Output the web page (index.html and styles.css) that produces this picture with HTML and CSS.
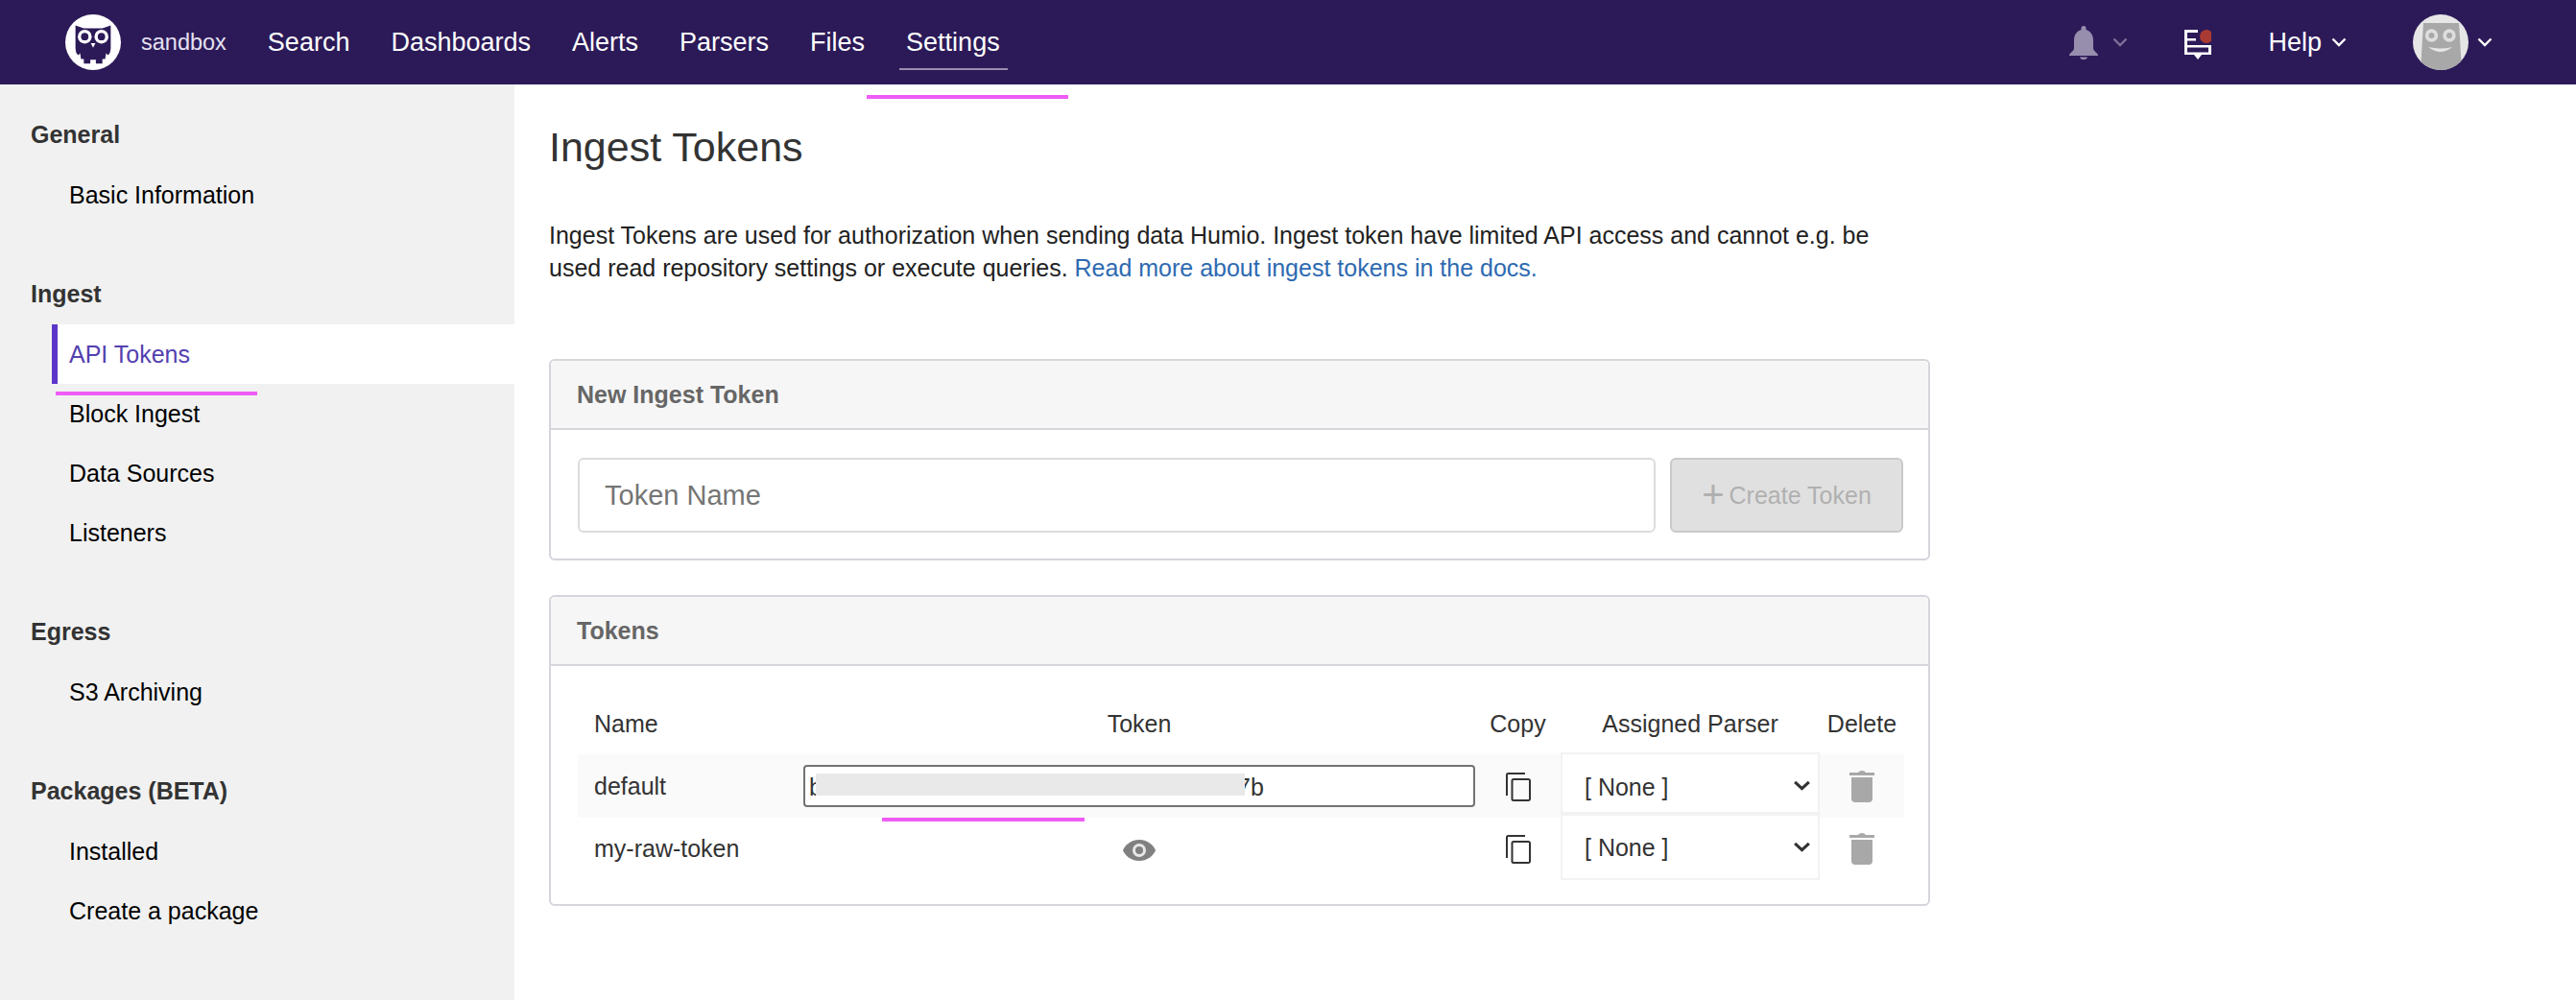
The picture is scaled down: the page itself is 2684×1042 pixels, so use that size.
FILE: index.html
```html
<!DOCTYPE html>
<html lang="en">
<head>
  <meta charset="UTF-8">
  <title>Ingest Tokens</title>
  <link rel="stylesheet" href="styles.css">
</head>
<body>

  <header class="topbar">
    <svg class="logo" viewBox="0 0 60 60">
      <circle cx="30" cy="30" r="30" fill="#fff"/>
      <path d="M11 12L20 15H40L49 12V36Q49 42 46 44L44 42L43 48H40V53H33V49H27V53H20V48H17L16 42L14 44Q11 42 11 36Z" fill="#2c1a58"/>
      <circle cx="21" cy="24" r="7.500" fill="#fff"/>
      <circle cx="39" cy="24" r="7.500" fill="#fff"/>
      <circle cx="21" cy="24" r="4" fill="#2c1a58"/>
      <circle cx="39" cy="24" r="4" fill="#2c1a58"/>
      <path d="M27.500 31H32.500L30 36Z" fill="#fff"/>
    </svg>
    <span class="repo">sandbox</span>
    <nav class="mainnav">
      <a href="#">Search</a>
      <a href="#">Dashboards</a>
      <a href="#">Alerts</a>
      <a href="#">Parsers</a>
      <a href="#">Files</a>
      <a href="#" class="current">Settings</a>
    </nav>
    <div class="topright">
      <svg class="bell" viewBox="0 0 30 35"><path d="M15 0a2.500 2.500 0 0 1 2.500 2.500V4C23 6 25 10 25 15V23C25 26 28 27 30 30V31H0V30C2 27 5 26 5 23V15C5 10 7 6 12.500 4V2.500A2.500 2.500 0 0 1 15 0Z M11 32.500H19C18 36 12 36 11 32.500Z" fill="#978eae"/></svg>
      <svg class="chev chev-dim" viewBox="0 0 16 10"><path d="M1.500 1.500 8 8l6.500-6.500" fill="none" stroke="#7d7197" stroke-width="2.400"/></svg>
      <svg class="news" viewBox="0 0 28 31">
        <path d="M0 0H14V3H3V9H12V11.500H3V16H28V26H18L14 31L10 26H0ZM3 18.500V23.500H25V18.500Z" fill="#fff"/>
        <circle cx="23" cy="7" r="7" fill="#a93a33"/>
      </svg>
      <span class="help">Help</span>
      <svg class="chev" viewBox="0 0 16 10"><path d="M1.500 1.500 8 8l6.500-6.500" fill="none" stroke="#fff" stroke-width="2.400"/></svg>
      <svg class="avatar" viewBox="0 0 58 58">
        <clipPath id="avatar-clip"><circle cx="29" cy="29" r="29"/></clipPath>
        <circle cx="29" cy="29" r="29" fill="#e6e6e6"/>
        <path d="M11 9H48L51 58H8Z" fill="#a8a8a8" clip-path="url(#avatar-clip)"/>
        <circle cx="19.500" cy="22" r="6.700" fill="#dedede"/>
        <circle cx="38" cy="22" r="6.700" fill="#dedede"/>
        <circle cx="19.500" cy="22" r="3" fill="#a8a8a8"/>
        <circle cx="38" cy="22" r="3" fill="#a8a8a8"/>
        <path d="M16 34Q29 37 41 34Q29 44 16 34Z" fill="#e6e6e6"/>
      </svg>
      <svg class="chev" viewBox="0 0 16 10"><path d="M1.500 1.500 8 8l6.500-6.500" fill="none" stroke="#fff" stroke-width="2.400"/></svg>
    </div>
  </header>

  <div class="page">
    <aside class="sidebar">
      <h3>General</h3>
      <a href="#">Basic Information</a>
      <h3>Ingest</h3>
      <a href="#" class="active">API Tokens</a>
      <a href="#">Block Ingest</a>
      <a href="#">Data Sources</a>
      <a href="#">Listeners</a>
      <h3>Egress</h3>
      <a href="#">S3 Archiving</a>
      <h3>Packages (BETA)</h3>
      <a href="#">Installed</a>
      <a href="#">Create a package</a>
    </aside>

    <main class="content">
      <h1>Ingest Tokens</h1>
      <p class="intro">Ingest Tokens are used for authorization when sending data Humio. Ingest token have limited API access and cannot e.g. be used read repository settings or execute queries. <a href="#">Read more about ingest tokens in the docs.</a></p>

      <section class="panel">
        <div class="panel-head">New Ingest Token</div>
        <div class="new-token">
          <input type="text" class="token-name" placeholder="Token Name">
          <button class="create-btn" disabled><span class="plus">+</span>Create Token</button>
        </div>
      </section>

      <section class="panel">
        <div class="panel-head">Tokens</div>
        <div class="tokens-body">
          <table class="tokens">
            <thead>
              <tr>
                <th class="col-name">Name</th>
                <th class="col-token">Token</th>
                <th class="col-copy">Copy</th>
                <th class="col-parser">Assigned Parser</th>
                <th class="col-delete">Delete</th>
              </tr>
            </thead>
            <tbody>
              <tr class="shaded">
                <td class="col-name">default</td>
                <td class="col-token">
                  <div class="token-box">b<span class="token-end">7b</span><span class="redact"></span></div>
                </td>
                <td class="col-copy">
                  <svg class="copy" viewBox="0 0 26 30"><path d="M20 1H2.500A1.500 1.500 0 0 0 1 2.500V24M8 7H23.500A1.500 1.500 0 0 1 25 8.500V27.500A1.500 1.500 0 0 1 23.500 29H8A1.500 1.500 0 0 1 6.500 27.500V8.500A1.500 1.500 0 0 1 8 7Z" fill="none" stroke="#333" stroke-width="2"/></svg>
                </td>
                <td class="col-parser">
                  <div class="parser">
                    <select><option>[ None ]</option></select>
                    <svg class="select-chev" viewBox="0 0 20 12"><path d="M2 2 10 9.500 18 2" fill="none" stroke="#333" stroke-width="3.400"/></svg>
                  </div>
                </td>
                <td class="col-delete">
                  <svg class="trash" viewBox="0 0 26 33"><path d="M0 2H9Q10 0 13 0T17 2H26V5H0ZM2 7H24V29A4 4 0 0 1 20 33H6A4 4 0 0 1 2 29Z" fill="#a8a8a8"/></svg>
                </td>
              </tr>
              <tr>
                <td class="col-name">my-raw-token</td>
                <td class="col-token">
                  <svg class="eye" viewBox="0 0 34 22"><path d="M17 0C26 0 32 6 34 11C32 16 26 22 17 22C8 22 2 16 0 11C2 6 8 0 17 0Z" fill="#808080"/><circle cx="17" cy="11" r="7" fill="#e8e8e8"/><circle cx="17" cy="11" r="4" fill="#808080"/></svg>
                </td>
                <td class="col-copy">
                  <svg class="copy" viewBox="0 0 26 30"><path d="M20 1H2.500A1.500 1.500 0 0 0 1 2.500V24M8 7H23.500A1.500 1.500 0 0 1 25 8.500V27.500A1.500 1.500 0 0 1 23.500 29H8A1.500 1.500 0 0 1 6.500 27.500V8.500A1.500 1.500 0 0 1 8 7Z" fill="none" stroke="#333" stroke-width="2"/></svg>
                </td>
                <td class="col-parser">
                  <div class="parser">
                    <select><option>[ None ]</option></select>
                    <svg class="select-chev" viewBox="0 0 20 12"><path d="M2 2 10 9.500 18 2" fill="none" stroke="#333" stroke-width="3.400"/></svg>
                  </div>
                </td>
                <td class="col-delete">
                  <svg class="trash" viewBox="0 0 26 33"><path d="M0 2H9Q10 0 13 0T17 2H26V5H0ZM2 7H24V29A4 4 0 0 1 20 33H6A4 4 0 0 1 2 29Z" fill="#a8a8a8"/></svg>
                </td>
              </tr>
            </tbody>
          </table>
        </div>
      </section>
    </main>
  </div>

  <!-- pink marks drawn on top of the screenshot -->
  <div class="mark mark-nav"></div>
  <div class="mark mark-side"></div>
  <div class="mark mark-token"></div>

</body>
</html>
```

FILE: styles.css
```css
* {
  box-sizing: border-box;
}

html, body {
  margin: 0;
  height: 100%;
  overflow: hidden;
}

body {
  font-family: "Liberation Sans", Arial, sans-serif;
  font-size: 25px;
  color: #333;
  background: #fff;
  position: relative;
}

a {
  text-decoration: none;
}

.topbar {
  height: 88px;
  background-color: #2c1a58;
  display: flex;
  align-items: center;
  padding-left: 68px;
  padding-right: 87px;
  color: #fff;
}

.logo {
  width: 58px;
  height: 58px;
}

.repo {
  font-size: 23.500px;
  margin-left: 21px;
  color: #e6e1f2;
}

.mainnav {
  display: flex;
  margin-left: 43px;
  height: 88px;
  align-items: center;
  gap: 43px;
}

.mainnav a {
  color: #fff;
  font-size: 27px;
  position: relative;
}

.mainnav a.current::after {
  content: "";
  position: absolute;
  left: -7px;
  right: -8px;
  bottom: -13px;
  height: 2px;
  background: #978eae;
}

.topright {
  margin-left: auto;
  display: flex;
  align-items: center;
}

.bell {
  width: 30px;
  height: 35px;
}

.chev {
  width: 16px;
  height: 10px;
}

.chev-dim {
  margin-left: 15px;
}

.news {
  width: 28px;
  height: 31px;
  margin-left: 59px;
  margin-top: 5px;
}

.help {
  font-size: 27px;
  margin-left: 59px;
  margin-right: 10px;
}

.avatar {
  width: 58px;
  height: 58px;
  margin-left: 69px;
  margin-right: 9px;
}

.page {
  display: flex;
  height: 954px;
}

.sidebar {
  width: 536px;
  background-color: #f1f1f1;
  padding-top: 37px;
}

.sidebar h3 {
  font-size: 25px;
  font-weight: bold;
  color: #333;
  margin: 0 0 17px 32px;
  line-height: 30px;
}

.sidebar a {
  display: block;
  color: #000;
  margin-left: 54px;
  height: 62px;
  line-height: 62px;
  border-left: 6px solid transparent;
  padding-left: 12px;
}

.sidebar a + h3 {
  margin-top: 57px;
}

.sidebar a.active {
  background: #fff;
  color: #5340b0;
  border-left-color: #5b35c9;
}

.content {
  width: 1475px;
  padding: 39px 0 0 36px;
}

h1 {
  font-size: 43px;
  font-weight: normal;
  margin: 0;
  line-height: 52px;
  color: #333;
}

.intro {
  font-size: 25px;
  line-height: 34px;
  margin: 49px 0 78px 0;
  width: 1420px;
  color: #222;
}

.intro a {
  color: #2e6ab1;
}

.panel {
  border: 2px solid #d5d5db;
  border-radius: 6px;
  margin-bottom: 36px;
  width: 1439px;
}

.panel-head {
  height: 72px;
  line-height: 70px;
  background: #f6f6f6;
  border-bottom: 2px solid #d5d5db;
  padding-left: 27px;
  font-weight: bold;
  font-size: 25px;
  color: #666;
  border-radius: 6px 6px 0 0;
}

.new-token {
  display: flex;
  padding: 29px 26px 27px 28px;
  gap: 15px;
}

.token-name {
  flex: 1;
  height: 78px;
  border: 2px solid #dcdce0;
  border-radius: 6px;
  padding: 0 26px;
  font-family: inherit;
  font-size: 29px;
}

.token-name::placeholder {
  color: #757575;
}

.create-btn {
  width: 243px;
  height: 78px;
  background: #e0e0e0;
  border: 2px solid #cacaca;
  border-radius: 6px;
  font-family: inherit;
  font-size: 25px;
  color: #b0b0b0;
  padding: 0;
}

.plus {
  font-size: 40px;
  font-weight: normal;
  line-height: 26px;
  vertical-align: -4px;
  margin-right: 5px;
}

.tokens-body {
  padding: 28px 25px 25px 28px;
}

.tokens {
  border-collapse: collapse;
  table-layout: fixed;
  width: 1382px;
}

.tokens th {
  font-weight: normal;
  font-size: 25px;
  height: 64px;
  color: #333;
  padding: 0;
}

.tokens td {
  padding: 0;
  height: 65px;
  font-size: 25px;
  color: #333;
}

.tokens tr.shaded {
  background: #fafafa;
}

.tokens tr.shaded td {
  height: 66px;
}

.tokens .col-name {
  width: 235px;
  padding-left: 17px;
  text-align: left;
}

.col-token {
  width: 700px;
  text-align: center;
}

.col-copy {
  width: 89px;
  text-align: center;
}

.col-parser {
  width: 270px;
  text-align: center;
}

.col-delete {
  width: 88px;
  text-align: center;
}

.token-box {
  height: 44px;
  width: 700px;
  border: 2px solid #737373;
  border-radius: 4px;
  background: #fff;
  line-height: 42px;
  text-align: left;
  padding-left: 4px;
  position: relative;
}

.redact {
  position: absolute;
  left: 11px;
  top: 7px;
  width: 447px;
  height: 23px;
  background: #e9e9e9;
}

.token-end {
  position: absolute;
  left: 450px;
  top: 0;
}

.parser {
  position: relative;
  height: 69px;
  margin-top: -4px;
  border: 2px solid #f2f2f2;
  background: #fff;
}

.shaded .parser {
  height: 64px;
  margin: -2px 0 4px 0;
}

.parser select {
  appearance: none;
  -webkit-appearance: none;
  border: none;
  background: transparent;
  width: 100%;
  height: 100%;
  padding: 1px 0 0 23px;
  font-family: inherit;
  font-size: 25px;
  color: #333;
}

.shaded .parser select {
  padding-top: 8px;
}

.select-chev {
  position: absolute;
  right: 7px;
  top: 27px;
  width: 19px;
  height: 11px;
}

.copy {
  width: 26px;
  height: 30px;
  vertical-align: middle;
}

.trash {
  width: 26px;
  height: 33px;
  vertical-align: middle;
}

.eye {
  width: 34px;
  height: 22px;
  vertical-align: middle;
}

.mark {
  position: absolute;
  background: #ee5cf5;
  height: 4px;
}

.mark-nav {
  left: 903px;
  top: 99px;
  width: 210px;
}

.mark-side {
  left: 58px;
  top: 408px;
  width: 210px;
}

.mark-token {
  left: 919px;
  top: 852px;
  width: 211px;
}
```
